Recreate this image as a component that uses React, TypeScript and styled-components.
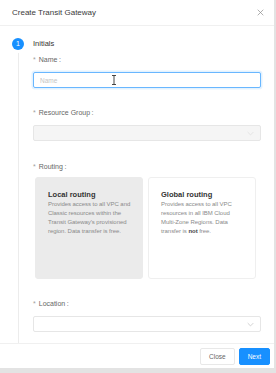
import React from "react";
import styled, { createGlobalStyle } from "styled-components";

const GlobalStyle = createGlobalStyle`
  html, body {
    margin: 0;
    padding: 0;
    background: #e3e3e3;
    font-family: "Liberation Sans", Arial, sans-serif;
  }
  * { box-sizing: border-box; }
`;

export default function App() {
  return (
    <>
      <GlobalStyle />
      <Modal>
        <Header>
          <Title>Create Transit Gateway</Title>
          <CloseIcon viewBox="0 0 10 10">
            <path d="M1 1 L9 9 M9 1 L1 9" stroke="#8c8c8c" strokeWidth="1" />
          </CloseIcon>
        </Header>
        <Body>
          <Step>
            <StepRail>
              <StepDot>1</StepDot>
              <StepTail />
            </StepRail>
            <StepContent>
              <StepTitle>Initials</StepTitle>
              <FormItem>
                <Label>Name</Label>
                <InputWrap>
                  <Input $focused placeholder="Name" />
                  <Cursor viewBox="0 0 6 10">
                    <path
                      d="M1 0.5 H5 M3 0.5 V9.5 M1 9.5 H5"
                      stroke="#333"
                      strokeWidth="0.9"
                      fill="none"
                    />
                  </Cursor>
                </InputWrap>
              </FormItem>
              <FormItem $space={20}>
                <Label>Resource Group</Label>
                <Select $disabled>
                  <Chevron viewBox="0 0 10 6" $faint>
                    <path d="M1 1 L5 5 L9 1" stroke="#d0d0d0" fill="none" />
                  </Chevron>
                </Select>
              </FormItem>
              <FormItem>
                <Label $tight>Routing</Label>
                <Cards>
                  <Card $selected>
                    <CardTitle>Local routing</CardTitle>
                    <CardText>
                      Provides access to all VPC and Classic resources within
                      the Transit Gateway's provisioned region. Data transfer
                      is free.
                    </CardText>
                  </Card>
                  <Card>
                    <CardTitle>Global routing</CardTitle>
                    <CardText>
                      Provides access to all VPC resources in all IBM Cloud{" "}
                      <NoWrap>Multi-Zone</NoWrap> Regions. Data transfer is{" "}
                      <Strong>not</Strong> free.
                    </CardText>
                  </Card>
                </Cards>
              </FormItem>
              <FormItem>
                <Label>Location</Label>
                <Select>
                  <Chevron viewBox="0 0 10 6">
                    <path d="M1 1 L5 5 L9 1" stroke="#bfbfbf" fill="none" />
                  </Chevron>
                </Select>
              </FormItem>
            </StepContent>
          </Step>
        </Body>
        <Footer>
          <Button>Close</Button>
          <Button $primary>Next</Button>
        </Footer>
      </Modal>
    </>
  );
}

const Modal = styled.div`
  width: 274px;
  height: 368px;
  background: #fff;
  display: flex;
  flex-direction: column;
  overflow: hidden;
`;

const Header = styled.div`
  height: 26px;
  flex: none;
  display: flex;
  align-items: center;
  justify-content: space-between;
  padding: 0 10px 1px 12px;
  border-bottom: 1px solid #f0f0f0;
`;

const Title = styled.div`
  font-size: 8px;
  color: #3a3a3a;
`;

const CloseIcon = styled.svg`
  width: 7px;
  height: 7px;
`;

const Body = styled.div`
  flex: 1;
  overflow: hidden;
  padding: 12px 12px 0 12px;
`;

const Step = styled.div`
  display: flex;
  gap: 9px;
  height: 100%;
`;

const StepRail = styled.div`
  width: 12px;
  flex: none;
  display: flex;
  flex-direction: column;
  align-items: center;
`;

const StepDot = styled.div`
  width: 12px;
  height: 12px;
  border-radius: 50%;
  background: #1890ff;
  color: #fff;
  font-size: 7px;
  line-height: 12px;
  text-align: center;
`;

const StepTail = styled.div`
  flex: 1;
  width: 1px;
  background: #ececec;
  margin-top: 3px;
`;

const StepContent = styled.div`
  flex: 1;
  padding-right: 1px;
`;

const StepTitle = styled.div`
  font-size: 7.5px;
  line-height: 12px;
  color: #333;
  margin-bottom: 4px;
`;

const FormItem = styled.div<{ $space?: number }>`
  margin-bottom: ${(p) => p.$space ?? 19}px;
`;

const Label = styled.div<{ $tight?: boolean }>`
  font-size: 7px;
  line-height: 12px;
  color: #666;
  margin-bottom: ${(p) => (p.$tight ? 4 : 6)}px;
  &::before {
    content: "*";
    color: #a0a0a0;
    margin-right: 3px;
  }
  &::after {
    content: ":";
    margin-left: 1.5px;
  }
`;

const InputWrap = styled.div`
  position: relative;
`;

const Input = styled.input<{ $focused?: boolean }>`
  display: block;
  width: 100%;
  height: 16px;
  padding: 0 6px;
  font-family: inherit;
  font-size: 6.5px;
  color: #333;
  background: #fff;
  border: 1px solid ${(p) => (p.$focused ? "#69b7ff" : "#e3e3e3")};
  border-radius: 2px;
  outline: none;
  box-shadow: ${(p) => (p.$focused ? "0 0 0 1.5px rgba(24,144,255,0.12)" : "none")};
  &::placeholder {
    color: #c4c4c4;
  }
`;

const Cursor = styled.svg`
  position: absolute;
  left: 78px;
  top: 3px;
  width: 6px;
  height: 10px;
`;

const Select = styled.div<{ $disabled?: boolean }>`
  height: 16px;
  display: flex;
  align-items: center;
  justify-content: flex-end;
  padding: 0 6px;
  border: 1px solid #e6e6e6;
  border-radius: 2px;
  background: ${(p) => (p.$disabled ? "#f5f5f5" : "#fff")};
`;

const Chevron = styled.svg<{ $faint?: boolean }>`
  width: 7px;
  height: 5px;
  opacity: ${(p) => (p.$faint ? 0.6 : 1)};
`;

const Cards = styled.div`
  display: flex;
  gap: 5px;
  padding-left: 2px;
  width: 225px;
`;

const Card = styled.div<{ $selected?: boolean }>`
  width: 108px;
  height: 102px;
  padding: 12px 6px 0 12px;
  border-radius: 3px;
  background: ${(p) => (p.$selected ? "#ebebeb" : "#fff")};
  border: 1px solid ${(p) => (p.$selected ? "#ebebeb" : "#efefef")};
`;

const CardTitle = styled.div`
  font-size: 7.5px;
  font-weight: bold;
  line-height: 10px;
  color: #333;
`;

const CardText = styled.div`
  font-size: 6px;
  line-height: 9px;
  letter-spacing: -0.05px;
  color: #8a8a8a;
`;

const NoWrap = styled.span`
  white-space: nowrap;
`;

const Strong = styled.span`
  font-weight: bold;
  color: #444;
`;

const Footer = styled.div`
  height: 25px;
  flex: none;
  display: flex;
  align-items: center;
  justify-content: flex-end;
  gap: 4px;
  padding: 1px 4px 0 0;
  border-top: 1px solid #f0f0f0;
`;

const Button = styled.button<{ $primary?: boolean }>`
  height: 17px;
  padding: 0 8px;
  font-family: inherit;
  font-size: 6.5px;
  border-radius: 2px;
  cursor: pointer;
  color: ${(p) => (p.$primary ? "#fff" : "#666")};
  background: ${(p) => (p.$primary ? "#1890ff" : "#fff")};
  border: 1px solid ${(p) => (p.$primary ? "#1890ff" : "#e8e8e8")};
`;
